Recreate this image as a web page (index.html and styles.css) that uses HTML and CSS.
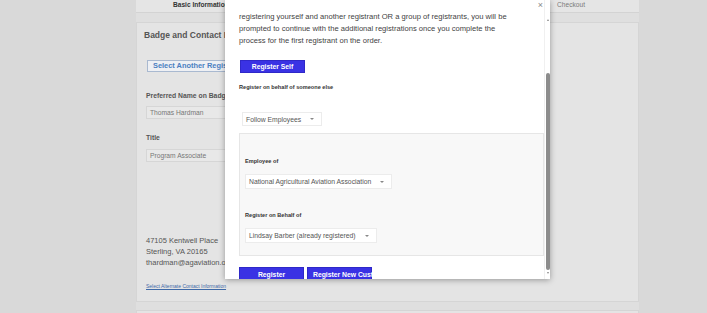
FILE: index.html
```html
<!DOCTYPE html>
<html lang="en">
<head>
    <meta charset="UTF-8">
    <meta name="viewport" content="width=device-width, initial-scale=1.0">
    <title>Registration - Badge and Contact</title>
    <link rel="stylesheet" href="styles.css">
</head>
<body>
    <div class="page">
        <div class="steps">
            <span class="step current">Basic Information</span>
            <span class="step">Badge and Contact</span>
            <span class="step">Review</span>
            <span class="step">Checkout</span>
        </div>

        <div class="card">
            <h2 class="card-title">Badge and Contact Information</h2>
            <button class="btn-outline">Select Another Registrant</button>

            <label class="field-label">Preferred Name on Badge</label>
            <div class="input">Thomas Hardman</div>

            <label class="field-label title-label">Title</label>
            <div class="input title-input">Program Associate</div>

            <div class="address">
                47105 Kentwell Place<br>
                Sterling, VA 20165<br>
                thardman@agaviation.org
            </div>
            <a class="alt-link" href="#">Select Alternate Contact Information</a>
        </div>

        <div class="card next-card"></div>
    </div>

    <div class="modal">
        <div class="modal-body">
            <p class="intro">registering yourself and another registrant OR a group of registrants, you will be prompted to continue with the additional registrations once you complete the process for the first registrant on the order.</p>

            <button class="btn-primary self-btn">Register Self</button>

            <div class="modal-label">Register on behalf of someone else</div>
            <div class="select follow-select">
                <span>Follow Employees</span>
                <i class="caret"></i>
            </div>

            <div class="behalf-panel">
                <div class="modal-label">Employee of</div>
                <div class="select">
                    <span>National Agricultural Aviation Association</span>
                    <i class="caret"></i>
                </div>

                <div class="modal-label behalf-label">Register on Behalf of</div>
                <div class="select">
                    <span>Lindsay Barber (already registered)</span>
                    <i class="caret"></i>
                </div>
            </div>

            <div class="actions">
                <button class="btn-primary">Register</button>
                <button class="btn-primary new-btn">Register New Customer</button>
            </div>
        </div>

        <div class="scrollbar">
            <i class="arrow-up"></i>
            <div class="thumb"></div>
            <i class="arrow-down"></i>
        </div>

        <span class="close">&times;</span>
    </div>
</body>
</html>
```

FILE: styles.css
```css
* {
    box-sizing: border-box;
}

body {
    margin: 0;
    height: 313px;
    overflow: hidden;
    font-family: "Liberation Sans", Arial, sans-serif;
    background: #d9d9d9;
    position: relative;
}

/* page under the dialog */
.page {
    width: 503px;
    height: 313px;
    margin-left: 136px;
    background: #dfdfdf;
}

.steps {
    height: 13px;
    display: flex;
    justify-content: space-between;
    padding: 0 54px 0 37px;
    background: #e5e5e5;
    border-bottom: 1px solid #d3d3d3;
    font-size: 6.6px;
    line-height: 9px;
    color: #7a7a7a;
}

.step.current {
    font-weight: bold;
    color: #333;
}

.card {
    height: 280px;
    margin-top: 9px;
    padding: 6px 9px 0 7px;
    background: #e4e4e4;
    border: 1px solid #d5d5d5;
}

.next-card {
    margin-top: 8px;
}

.card-title {
    margin: 0;
    font-size: 8.5px;
    line-height: 12px;
    color: #555;
}

.btn-outline {
    display: block;
    height: 12px;
    margin: 19px 0 0 3px;
    padding: 0 5px;
    font-family: inherit;
    font-size: 7.4px;
    font-weight: bold;
    line-height: 10px;
    color: #4a7fc1;
    background: #eef0f4;
    border: 1px solid #a9b9d0;
}

.field-label {
    display: block;
    margin: 19px 0 0 2px;
    font-size: 6.8px;
    font-weight: bold;
    line-height: 10px;
    color: #555;
}

.title-label {
    margin-top: 14px;
}

.input {
    width: 140px;
    height: 13px;
    margin: 5px 0 0 2px;
    padding-left: 3px;
    font-size: 6.7px;
    line-height: 11px;
    color: #777;
    background: #e8e8e8;
    border: 1px solid #d6d6d6;
}

.title-input {
    margin-top: 6px;
}

.address {
    margin: 73px 0 0 2px;
    font-size: 7.5px;
    line-height: 11px;
    color: #555;
}

.alt-link {
    display: block;
    margin: 14px 0 0 2px;
    font-size: 5px;
    line-height: 8px;
    color: #3f6aa8;
}

/* dialog */
.modal {
    position: absolute;
    left: 225px;
    top: 0;
    width: 325px;
    height: 279px;
    display: flex;
    overflow: hidden;
    background: #fff;
    box-shadow: 0 1px 6px rgba(0, 0, 0, 0.35);
}

.modal-body {
    flex: 1;
    padding: 11px 0 0 14px;
}

.intro {
    width: 274px;
    margin: 0;
    font-size: 7.6px;
    line-height: 12px;
    color: #3f3f3f;
}

.btn-primary {
    display: block;
    width: 65px;
    height: 13px;
    padding: 0;
    font-family: inherit;
    font-size: 6.8px;
    font-weight: bold;
    line-height: 11px;
    color: #fff;
    background: #3a32e4;
    border: 1px solid #2f28c8;
}

.self-btn {
    margin: 13px 0 0 1px;
}

.modal-label {
    margin-top: 9px;
    font-size: 5.6px;
    font-weight: bold;
    line-height: 10px;
    color: #333;
}

.select {
    display: flex;
    width: fit-content;
    height: 15px;
    margin-top: 8px;
    align-items: center;
    gap: 9px;
    padding: 0 7px 0 3px;
    font-size: 6.8px;
    color: #555;
    background: #fff;
    border: 1px solid #ececec;
}

.follow-select {
    height: 14px;
    margin: 20px 0 0 3px;
}

.caret {
    width: 0;
    height: 0;
    border-left: 2px solid transparent;
    border-right: 2px solid transparent;
    border-top: 2px solid #888;
}

.behalf-panel {
    margin-top: 7px;
    padding: 22px 5px 12px;
    background: #f8f8f8;
    border: 1px solid #e6e6e6;
}

.behalf-panel .modal-label {
    margin-top: 0;
}

.behalf-panel .behalf-label {
    margin-top: 21px;
}

.actions {
    display: flex;
    gap: 3px;
    margin-top: 11px;
}

.actions .btn-primary {
    height: 14px;
}

.new-btn {
    padding-left: 5px;
    text-align: left;
    white-space: nowrap;
    overflow: visible;
}

.scrollbar {
    width: 6px;
    display: flex;
    flex-direction: column;
    align-items: center;
    padding-top: 19px;
    background: #fff;
    border-left: 1px solid #f0f0f0;
}

.arrow-up,
.arrow-down {
    width: 0;
    height: 0;
    border-left: 1.5px solid transparent;
    border-right: 1.5px solid transparent;
}

.arrow-up {
    border-bottom: 2px solid #888;
}

.arrow-down {
    margin-top: 2px;
    border-top: 2px solid #888;
}

.thumb {
    width: 4px;
    height: 197px;
    margin-top: 52px;
    background: #8c8c8c;
    border-radius: 2px;
}

.close {
    position: absolute;
    top: 0;
    right: 7px;
    font-size: 9px;
    line-height: 10px;
    color: #888;
}
```
